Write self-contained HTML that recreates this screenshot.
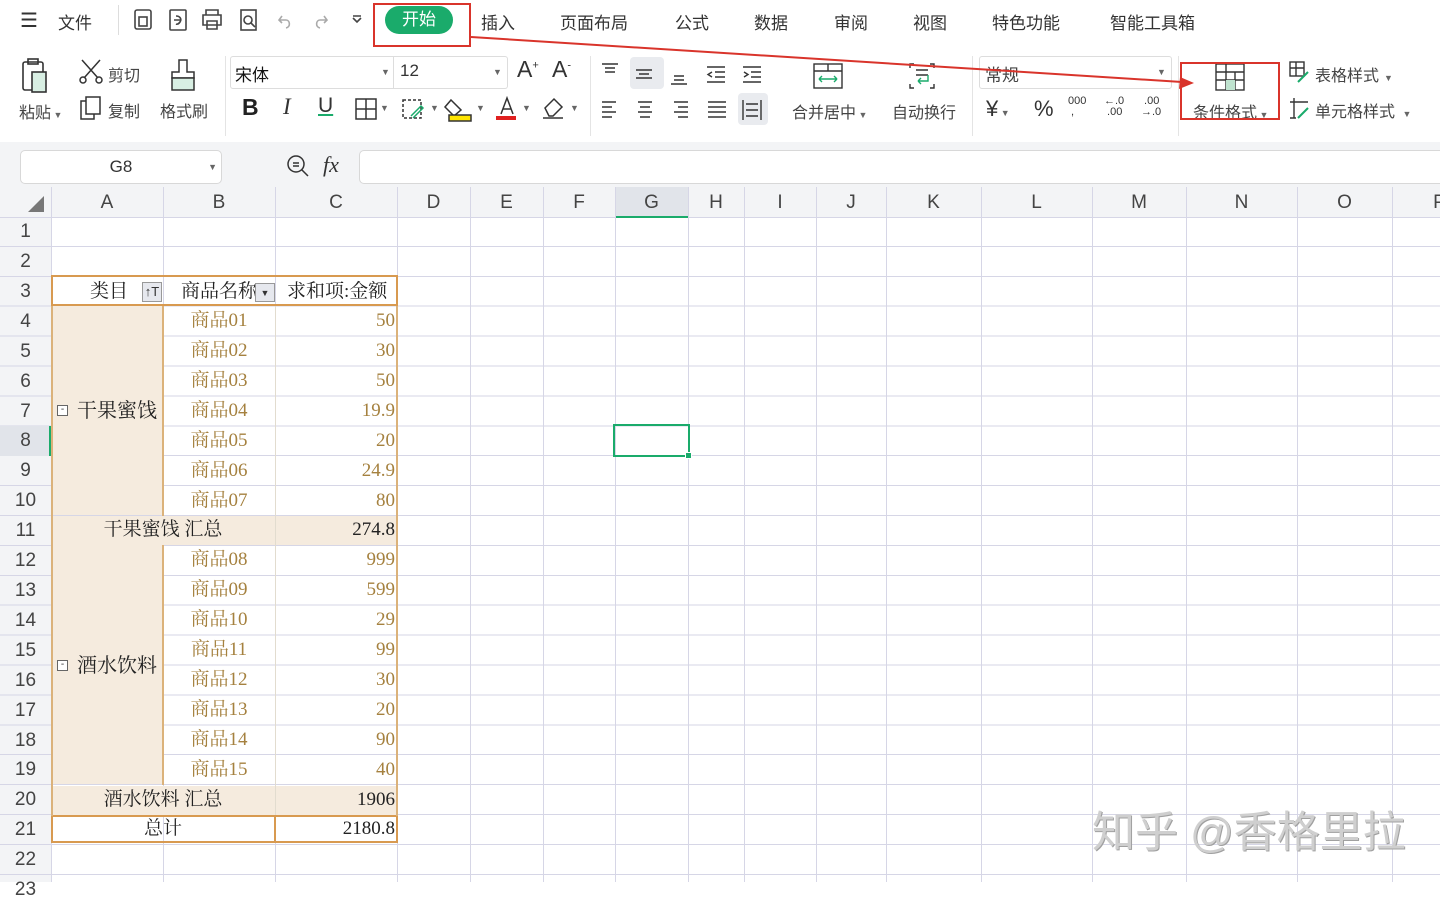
<!DOCTYPE html>
<html><head><meta charset="utf-8"><style>
*{margin:0;padding:0;box-sizing:border-box}
body{width:1440px;height:882px;overflow:hidden;background:#fff;font-family:"Liberation Sans","Noto Sans CJK SC",sans-serif;color:#333;position:relative}
.a{position:absolute}
.t{position:absolute;font-size:17px;color:#333;white-space:nowrap}
.s{position:absolute;font-size:16px;color:#444;white-space:nowrap}
.vl{position:absolute;top:187px;width:1px;height:695px;background:#d6d6e6}
.ch{position:absolute;top:187px;height:31px;line-height:31px;text-align:center;font-size:19px;color:#444}
.rh{position:absolute;left:0;width:51px;height:30px;line-height:30px;text-align:center;font-size:19px;color:#444}
.c{position:absolute;height:30px;line-height:30px;font-family:"Liberation Serif","Noto Serif CJK SC",serif;font-size:19px;white-space:nowrap}
.it{color:#a5813f;text-align:center}
.nm{color:#a5813f;text-align:right;padding-right:2px}
.bk{color:#222}
.dd{font-size:9px;color:#666}
</style></head><body>
<div class="a" style="left:0;top:0;width:1440px;height:142px;background:#fff"></div>
<div class="t" style="left:20px;top:8px;font-size:20px">☰</div>
<div class="t" style="left:58px;top:9px">文件</div>
<div class="a" style="left:118px;top:5px;width:1px;height:30px;background:#ddd"></div>
<svg class="a" style="left:130px;top:6px" width="240" height="28" viewBox="0 0 240 28" fill="none" stroke="#444" stroke-width="1.6">
<rect x="5" y="4" width="16" height="19" rx="2"/><rect x="9" y="11" width="8" height="9"/>
<rect x="40" y="4" width="16" height="20" rx="1"/><path d="M44 14h6M46 10c4 0 6 3 4 6s-4 2-4 2"/>
<path d="M76 9V4h12v5M73 9h18v10H73zM77 15h10v8H77z"/>
<rect x="111" y="4" width="15" height="20"/><circle cx="118" cy="14" r="4"/><path d="M121 17l4 4"/>
<path d="M152 10l-3 4 3 3M149 14h7c4 0 5 7 0 8" stroke="#aaa"/>
<path d="M194 10l3 4-3 3M197 14h-7c-4 0-5 7 0 8" stroke="#aaa"/>
<path d="M223 12l4 4 4-4M223 10h8"/>
</svg>
<div class="a" style="left:385px;top:6px;width:68px;height:28px;border-radius:14px;background:#1aab6b;color:#fff;font-size:17px;text-align:center;line-height:28px">开始</div>
<div class="a" style="left:373px;top:3px;width:98px;height:44px;border:2px solid #d9342b"></div>
<div class="t" style="left:481px;top:9px">插入</div>
<div class="t" style="left:560px;top:9px">页面布局</div>
<div class="t" style="left:675px;top:9px">公式</div>
<div class="t" style="left:754px;top:9px">数据</div>
<div class="t" style="left:834px;top:9px">审阅</div>
<div class="t" style="left:913px;top:9px">视图</div>
<div class="t" style="left:992px;top:9px">特色功能</div>
<div class="t" style="left:1110px;top:9px">智能工具箱</div>

<svg class="a" style="left:18px;top:56px" width="44" height="40" fill="none" stroke="#333" stroke-width="1.6"><rect x="5" y="6" width="20" height="28" rx="2"/><rect x="10" y="3" width="10" height="5"/><rect x="14" y="16" width="14" height="20" fill="#d8efe3" stroke="#333"/></svg>
<div class="s" style="left:19px;top:99px">粘贴<span class="dd"> ▼</span></div>
<svg class="a" style="left:78px;top:58px" width="26" height="26" fill="none" stroke="#333" stroke-width="1.5"><path d="M4 2l16 18M22 2L6 20"/><circle cx="5" cy="22" r="3"/><circle cx="21" cy="22" r="3"/></svg>
<div class="s" style="left:108px;top:62px">剪切</div>
<svg class="a" style="left:78px;top:95px" width="26" height="26" fill="none" stroke="#333" stroke-width="1.5"><rect x="8" y="2" width="14" height="17"/><path d="M8 6H3v18h13v-5"/></svg>
<div class="s" style="left:108px;top:98px">复制</div>
<svg class="a" style="left:168px;top:58px" width="30" height="36" fill="none" stroke="#333" stroke-width="1.5"><path d="M11 2h8v12h7v6H4v-6h7z"/><rect x="4" y="20" width="22" height="12" fill="#d8efe3" stroke="#333"/></svg>
<div class="s" style="left:160px;top:98px">格式刷</div>
<div class="a" style="left:225px;top:56px;width:1px;height:80px;background:#e4e4e4"></div>
<div class="a" style="left:230px;top:56px;width:164px;height:33px;border:1px solid #ddd;border-radius:3px 0 0 3px"></div>
<div class="t" style="left:235px;top:61px;color:#111">宋体</div><div class="dd a" style="left:381px;top:67px">▼</div>
<div class="a" style="left:394px;top:56px;width:114px;height:33px;border:1px solid #ddd;border-left:none;border-radius:0 3px 3px 0"></div>
<div class="t" style="left:400px;top:61px;color:#333">12</div><div class="dd a" style="left:493px;top:67px">▼</div>
<div class="t" style="left:517px;top:56px;font-size:23px">A<sup style="font-size:11px">+</sup></div>
<div class="t" style="left:552px;top:56px;font-size:23px">A<sup style="font-size:11px">-</sup></div>
<div class="t" style="left:242px;top:94px;font-size:23px;font-weight:bold;color:#222">B</div>
<div class="t" style="left:283px;top:94px;font-size:23px;font-style:italic;font-family:'Liberation Serif',serif">I</div>
<div class="t" style="left:318px;top:94px;font-size:21px;text-decoration:underline;text-decoration-color:#1aab6b">U</div>
<svg class="a" style="left:355px;top:96px" width="225" height="28" fill="none" stroke="#333" stroke-width="1.5">
<rect x="1" y="3" width="20" height="20"/><path d="M11 3v20M1 13h20"/>
<rect x="48" y="4" width="18" height="18" stroke-dasharray="3 2"/><path d="M56 20l10-10 2 2-10 10" stroke="#1aab6b"/>
<path d="M96 4l10 10-7 6-9-9z"/><rect x="94" y="19" width="22" height="6" fill="#ffe500" stroke="#333"/>
<path d="M146 18l6-16 6 16M148 13h8" /><rect x="141" y="20" width="20" height="4" fill="#e02020" stroke="none"/>
<path d="M190 12l9-9 8 8-9 9h-4z"/><path d="M188 22h20"/>
</svg>
<div class="dd a" style="left:380px;top:103px">▼</div><div class="dd a" style="left:430px;top:103px">▼</div><div class="dd a" style="left:476px;top:103px">▼</div><div class="dd a" style="left:522px;top:103px">▼</div><div class="dd a" style="left:570px;top:103px">▼</div>
<div class="a" style="left:590px;top:56px;width:1px;height:80px;background:#e4e4e4"></div>
<div class="a" style="left:630px;top:57px;width:34px;height:32px;background:#e9ebef;border-radius:4px"></div>
<div class="a" style="left:738px;top:93px;width:30px;height:32px;background:#e9ebef;border-radius:4px"></div>
<svg class="a" style="left:598px;top:60px" width="175" height="65" fill="none" stroke="#333" stroke-width="1.4">
<path d="M4 4h16M7 8h10M7 12h10"/><path d="M38 10h16M41 14h10M38 18h16" stroke="#333"/><path d="M76 16h10M76 20h10M73 24h16"/>
<path d="M109 7h18M117 12h10M117 17h10M109 22h18M114 12l-4 2.5 4 2.5" stroke="#333"/><path d="M145 7h18M153 12h10M153 17h10M145 22h18M146 12l4 2.5-4 2.5"/>
<path d="M4 42h14M4 47h10M4 52h14M4 57h10"/><path d="M40 42h14M42 47h10M40 52h14M42 57h10"/><path d="M76 42h14M80 47h10M76 52h14M80 57h10"/><path d="M110 42h18M110 47h18M110 52h18M110 57h18"/>
<path d="M145 40v20M163 40v20M148 50h12M148 44h12M148 56h12"/>
</svg>
<svg class="a" style="left:812px;top:62px" width="34" height="30" fill="none" stroke="#333" stroke-width="1.4"><rect x="2" y="2" width="28" height="24"/><path d="M2 9h28M16 2v7" /><path d="M7 17h18M7 17l3-3M7 17l3 3M25 17l-3-3M25 17l-3 3" stroke="#1aab6b"/></svg>
<div class="s" style="left:792px;top:99px">合并居中<span class="dd"> ▼</span></div>
<svg class="a" style="left:906px;top:62px" width="34" height="30" fill="none" stroke="#333" stroke-width="1.4"><path d="M4 6V2h4M28 6V2h-4M4 22v4h4M28 22v4h-4M10 8h12M10 13h12"/><path d="M22 13v6H12M12 19l3-3M12 19l3 3" stroke="#1aab6b"/></svg>
<div class="s" style="left:892px;top:99px">自动换行</div>
<div class="a" style="left:972px;top:56px;width:1px;height:80px;background:#e4e4e4"></div>
<div class="a" style="left:979px;top:56px;width:193px;height:33px;border:1px solid #ddd;border-radius:3px"></div>
<div class="t" style="left:985px;top:61px;color:#444">常规</div><div class="dd a" style="left:1157px;top:67px">▼</div>
<div class="t" style="left:986px;top:96px;font-size:22px">¥<span class="dd"> ▼</span></div>
<div class="t" style="left:1034px;top:96px;font-size:22px">%</div>
<div class="t" style="left:1068px;top:96px;font-size:11px;line-height:11px">000<br>&nbsp;,</div>
<div class="t" style="left:1104px;top:96px;font-size:11px;line-height:11px">←.0<br>&nbsp;.00</div>
<div class="t" style="left:1141px;top:96px;font-size:11px;line-height:11px">&nbsp;.00<br>→.0</div>
<div class="a" style="left:1178px;top:56px;width:1px;height:80px;background:#e4e4e4"></div>
<svg class="a" style="left:1214px;top:62px" width="34" height="30" fill="none" stroke="#333" stroke-width="1.4"><rect x="2" y="2" width="28" height="26"/><path d="M2 10h28M2 18h28M12 2v26M21 10v18"/><rect x="12" y="18" width="9" height="10" fill="#bfe3cf" stroke="none"/></svg>
<div class="s" style="left:1193px;top:99px">条件格式<span class="dd"> ▼</span></div>
<div class="a" style="left:1180px;top:62px;width:100px;height:58px;border:2px solid #d9342b"></div>
<svg class="a" style="left:1288px;top:60px" width="22" height="24" fill="none" stroke="#333" stroke-width="1.4"><rect x="2" y="2" width="14" height="14"/><path d="M2 8h14M8 2v14"/><path d="M10 22l10-10" stroke="#1aab6b" stroke-width="2"/></svg>
<div class="s" style="left:1315px;top:62px">表格样式<span class="dd"> &nbsp;▼</span></div>
<svg class="a" style="left:1288px;top:96px" width="24" height="26" fill="none" stroke="#333" stroke-width="1.4"><path d="M2 6h18M6 2v20M2 22h6"/><path d="M10 22l10-10" stroke="#1aab6b" stroke-width="2"/></svg>
<div class="s" style="left:1315px;top:98px">单元格样式<span class="dd"> &nbsp;&nbsp;▼</span></div>
<svg class="a" style="left:0;top:0" width="1440" height="140"><line x1="471" y1="37" x2="1182" y2="82" stroke="#d9342b" stroke-width="2"/><path d="M1194 83l-14 -6 -1 12z" fill="#d9342b"/></svg>

<div class="a" style="left:0;top:142px;width:1440px;height:45px;background:#f3f4f6"></div>
<div class="a" style="left:20px;top:150px;width:202px;height:34px;background:#fff;border:1px solid #d8d8d8;border-radius:5px;text-align:center;line-height:32px;font-size:17px;color:#333">G8<span class="dd" style="position:absolute;right:4px">▼</span></div>
<svg class="a" style="left:286px;top:154px" width="26" height="26" fill="none" stroke="#333" stroke-width="1.5"><circle cx="10" cy="10" r="8"/><path d="M16 16l6 6M7 9h6M7 12h6"/></svg>
<div class="t" style="left:323px;top:152px;font-size:22px;font-style:italic;font-family:'Liberation Serif',serif">fx</div>
<div class="a" style="left:359px;top:150px;width:1090px;height:34px;background:#fff;border:1px solid #d8d8d8;border-radius:5px"></div>

<div class="a" style="left:0;top:187px;width:1440px;height:31px;background:#f3f4f6;border-bottom:1px solid #d6d6e6"></div>
<div class="a" style="left:0;top:218px;width:51px;height:664px;background:#f3f4f6"></div>
<div class="a" style="left:0;top:217px;width:1440px;height:665px;background:repeating-linear-gradient(to bottom,transparent 0,transparent 28.9px,#d6d6e6 28.9px,#d6d6e6 29.9px)"></div>
<div class="a" style="left:615px;top:187px;width:73px;height:31px;background:#e1e4ea;border-bottom:2px solid #1aab6b"></div>
<div class="a" style="left:0;top:426px;width:51px;height:30px;background:#e1e4ea;border-right:2px solid #1aab6b"></div>
<svg class="a" style="left:28px;top:196px" width="18" height="18"><path d="M16 0V16H0z" fill="#777"/></svg>
<div class="vl" style="left:51px"></div><div class="vl" style="left:163px"></div><div class="vl" style="left:275px"></div><div class="vl" style="left:397px"></div><div class="vl" style="left:470px"></div><div class="vl" style="left:543px"></div><div class="vl" style="left:615px"></div><div class="vl" style="left:688px"></div><div class="vl" style="left:744px"></div><div class="vl" style="left:816px"></div><div class="vl" style="left:886px"></div><div class="vl" style="left:981px"></div><div class="vl" style="left:1092px"></div><div class="vl" style="left:1186px"></div><div class="vl" style="left:1297px"></div><div class="vl" style="left:1392px"></div>
<div class="ch" style="left:51px;width:112px">A</div><div class="ch" style="left:163px;width:112px">B</div><div class="ch" style="left:275px;width:122px">C</div><div class="ch" style="left:397px;width:73px">D</div><div class="ch" style="left:470px;width:73px">E</div><div class="ch" style="left:543px;width:72px">F</div><div class="ch" style="left:615px;width:73px">G</div><div class="ch" style="left:688px;width:56px">H</div><div class="ch" style="left:744px;width:72px">I</div><div class="ch" style="left:816px;width:70px">J</div><div class="ch" style="left:886px;width:95px">K</div><div class="ch" style="left:981px;width:111px">L</div><div class="ch" style="left:1092px;width:94px">M</div><div class="ch" style="left:1186px;width:111px">N</div><div class="ch" style="left:1297px;width:95px">O</div><div class="ch" style="left:1392px;width:95px">P</div>
<div class="rh" style="top:217px">1</div><div class="rh" style="top:247px">2</div><div class="rh" style="top:277px">3</div><div class="rh" style="top:307px">4</div><div class="rh" style="top:337px">5</div><div class="rh" style="top:367px">6</div><div class="rh" style="top:397px">7</div><div class="rh" style="top:426px">8</div><div class="rh" style="top:456px">9</div><div class="rh" style="top:486px">10</div><div class="rh" style="top:516px">11</div><div class="rh" style="top:546px">12</div><div class="rh" style="top:576px">13</div><div class="rh" style="top:606px">14</div><div class="rh" style="top:636px">15</div><div class="rh" style="top:666px">16</div><div class="rh" style="top:696px">17</div><div class="rh" style="top:726px">18</div><div class="rh" style="top:755px">19</div><div class="rh" style="top:785px">20</div><div class="rh" style="top:815px">21</div><div class="rh" style="top:845px">22</div><div class="rh" style="top:875px">23</div>

<div class="a" style="left:52px;top:306px;width:111px;height:209px;background:#f5ebde"></div>
<div class="a" style="left:52px;top:545px;width:111px;height:239px;background:#f5ebde"></div>
<div class="a" style="left:52px;top:516px;width:345px;height:29px;background:#f5ebde"></div>
<div class="a" style="left:52px;top:786px;width:345px;height:29px;background:#f5ebde"></div>
<div class="a" style="left:162px;top:306px;width:2px;height:210px;background:#dbb27a"></div>
<div class="a" style="left:162px;top:545px;width:2px;height:240px;background:#dbb27a"></div>
<div class="a" style="left:275px;top:306px;width:1px;height:510px;background:#e2dccf"></div>
<div class="a" style="left:51px;top:275px;width:347px;height:31px;border:2px solid #d89a50"></div>
<div class="a" style="left:51px;top:815px;width:347px;height:28px;border:2px solid #d89a50"></div>
<div class="a" style="left:274px;top:815px;width:2px;height:28px;background:#d89a50"></div>
<div class="a" style="left:51px;top:306px;width:2px;height:510px;background:#dbb27a"></div>
<div class="a" style="left:396px;top:306px;width:2px;height:510px;background:#dbb27a"></div>
<div class="c bk" style="left:90px;top:277px">类目</div>
<div class="a" style="left:142px;top:282px;width:20px;height:20px;background:#e6e8ee;border:1px solid #999;font-size:13px;text-align:center;line-height:18px">↑T</div>
<div class="c bk" style="left:181px;top:277px;width:80px;overflow:hidden">商品名称</div>
<div class="a" style="left:255px;top:283px;width:20px;height:19px;background:#e6e8ee;border:1px solid #999;font-size:9px;text-align:center;line-height:18px">▼</div>
<div class="c bk" style="left:287px;top:277px">求和项:金额</div>
<div class="a" style="left:57px;top:405px;width:11px;height:11px;border:1px solid #666;background:#fff;font-size:10px;line-height:8px;text-align:center">-</div>
<div class="c bk" style="left:77px;top:396px;font-size:20px">干果蜜饯</div>
<div class="a" style="left:57px;top:660px;width:11px;height:11px;border:1px solid #666;background:#fff;font-size:10px;line-height:8px;text-align:center">-</div>
<div class="c bk" style="left:77px;top:651px;font-size:20px">酒水饮料</div>
<div class="c it" style="left:163px;top:306px;width:112px">商品01</div><div class="c nm" style="left:275px;top:306px;width:122px">50</div>
<div class="c it" style="left:163px;top:336px;width:112px">商品02</div><div class="c nm" style="left:275px;top:336px;width:122px">30</div>
<div class="c it" style="left:163px;top:366px;width:112px">商品03</div><div class="c nm" style="left:275px;top:366px;width:122px">50</div>
<div class="c it" style="left:163px;top:396px;width:112px">商品04</div><div class="c nm" style="left:275px;top:396px;width:122px">19.9</div>
<div class="c it" style="left:163px;top:426px;width:112px">商品05</div><div class="c nm" style="left:275px;top:426px;width:122px">20</div>
<div class="c it" style="left:163px;top:456px;width:112px">商品06</div><div class="c nm" style="left:275px;top:456px;width:122px">24.9</div>
<div class="c it" style="left:163px;top:486px;width:112px">商品07</div><div class="c nm" style="left:275px;top:486px;width:122px">80</div>
<div class="c bk" style="left:51px;top:515px;width:224px;text-align:center">干果蜜饯 汇总</div><div class="c nm bk" style="left:275px;top:515px;width:122px;color:#222">274.8</div>
<div class="c it" style="left:163px;top:545px;width:112px">商品08</div><div class="c nm" style="left:275px;top:545px;width:122px">999</div>
<div class="c it" style="left:163px;top:575px;width:112px">商品09</div><div class="c nm" style="left:275px;top:575px;width:122px">599</div>
<div class="c it" style="left:163px;top:605px;width:112px">商品10</div><div class="c nm" style="left:275px;top:605px;width:122px">29</div>
<div class="c it" style="left:163px;top:635px;width:112px">商品11</div><div class="c nm" style="left:275px;top:635px;width:122px">99</div>
<div class="c it" style="left:163px;top:665px;width:112px">商品12</div><div class="c nm" style="left:275px;top:665px;width:122px">30</div>
<div class="c it" style="left:163px;top:695px;width:112px">商品13</div><div class="c nm" style="left:275px;top:695px;width:122px">20</div>
<div class="c it" style="left:163px;top:725px;width:112px">商品14</div><div class="c nm" style="left:275px;top:725px;width:122px">90</div>
<div class="c it" style="left:163px;top:755px;width:112px">商品15</div><div class="c nm" style="left:275px;top:755px;width:122px">40</div>
<div class="c bk" style="left:51px;top:785px;width:224px;text-align:center">酒水饮料 汇总</div><div class="c nm" style="left:275px;top:785px;width:122px;color:#222">1906</div>
<div class="c bk" style="left:51px;top:814px;width:224px;text-align:center">总计</div><div class="c nm" style="left:275px;top:814px;width:122px;color:#222">2180.8</div>
<div class="a" style="left:613px;top:424px;width:77px;height:33px;border:2px solid #1aab6b"></div>
<div class="a" style="left:685px;top:452px;width:7px;height:7px;background:#1aab6b;border:1px solid #fff"></div>
<div class="a" style="left:1092px;top:798px;font-size:43px;color:#cfcfcf;white-space:nowrap;text-shadow:1px 1px 0 #a0a0a0">知乎 @香格里拉</div>
</body></html>
